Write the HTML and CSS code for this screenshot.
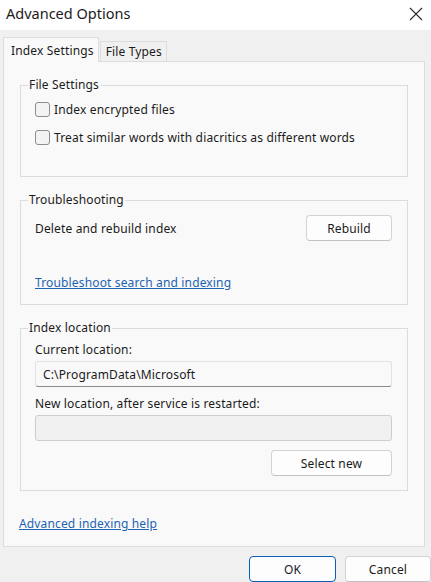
FILE: index.html
```html
<!DOCTYPE html>
<html>
<head>
<meta charset="utf-8">
<link rel="stylesheet" href="styles.css">
</head>
<body>
<div class="window">
  <div class="titlebar">
    <span class="title">Advanced Options</span>
    <svg class="close" width="14" height="14" viewBox="0 0 14 14"><path d="M1 1 L13 13 M13 1 L1 13" stroke="#2b2b2b" stroke-width="1.1" fill="none"/></svg>
  </div>
  <div class="body">
    <div class="tabs">
      <div class="tab active">Index Settings</div>
      <div class="tab">File Types</div>
    </div>
    <div class="panel">
      <fieldset class="group g1">
        <legend>File Settings</legend>
        <div class="checks">
          <label class="check-row"><span class="box"></span><span>Index encrypted files</span></label>
          <label class="check-row"><span class="box"></span><span>Treat similar words with diacritics as different words</span></label>
        </div>
      </fieldset>
      <fieldset class="group g2">
        <legend>Troubleshooting</legend>
        <div class="row-between">
          <span>Delete and rebuild index</span>
          <button class="btn">Rebuild</button>
        </div>
        <a class="link trouble">Troubleshoot search and indexing</a>
      </fieldset>
      <fieldset class="group g3">
        <legend>Index location</legend>
        <div class="label l1">Current location:</div>
        <div class="field readonly">C:\ProgramData\Microsoft</div>
        <div class="label l2">New location, after service is restarted:</div>
        <div class="field disabled"></div>
        <div class="right">
          <button class="btn">Select new</button>
        </div>
      </fieldset>
      <a class="link help">Advanced indexing help</a>
    </div>
    <div class="footer">
      <button class="btn ok">OK</button>
      <button class="btn cancel">Cancel</button>
    </div>
  </div>
</div>
</body>
</html>
```

FILE: styles.css
```css
* { box-sizing: border-box; }
html, body {
  margin: 0;
  padding: 0;
  width: 431px;
  height: 582px;
  overflow: hidden;
  background: #f0f0f0;
  font-family: "Noto Sans", "Open Sans", sans-serif;
  font-size: 12px;
  letter-spacing: 0.15px;
  color: #1b1b1b;
}
.window { width: 431px; height: 582px; display: flex; flex-direction: column; }
.titlebar {
  height: 31px;
  background: #ffffff;
  display: flex;
  align-items: center;
  justify-content: space-between;
  padding: 0 8px 5px 6px;
}
.title { font-size: 14.5px; letter-spacing: 0; color: #1b1b1b; }
.close { margin-top: 2px; }
.body { flex: 1; padding: 7px 6px 0 3px; display: flex; flex-direction: column; }
.tabs { display: flex; height: 24px; align-items: flex-end; position: relative; z-index: 1; }
.tab {
  height: 20px;
  padding: 0 4px 0 5px;
  border: 1px solid #dcdcdc;
  border-bottom: none;
  background: #f0f0f0;
  display: flex;
  align-items: center;
  margin-left: 1px;
}
.tab.active {
  height: 25px;
  margin-left: 0;
  padding: 0 4px 0 7px;
  background: #f9f9f9;
  margin-bottom: -1px;
}
.panel {
  height: 486px;
  border: 1px solid #dcdcdc;
  background: #f9f9f9;
  padding: 15px 16px 0 16px;
  display: flex;
  flex-direction: column;
}
.group {
  margin: 0;
  border: 1px solid #dcdcdc;
  padding: 0 15px 0 14px;
  min-width: 0;
  display: flex;
  flex-direction: column;
}
.group legend {
  line-height: 16px;
  padding: 0 1px;
  margin-left: -7px;
}
.g1 { height: 100px; }
.g2 { height: 113px; margin-top: 15px; }
.g3 { height: 171px; margin-top: 15px; }
.checks { display: flex; flex-direction: column; gap: 12px; padding-top: 8px; }
.check-row { display: flex; align-items: center; height: 16px; gap: 4px; }
.box {
  width: 15px;
  height: 15px;
  border: 1px solid #8d8d8d;
  border-radius: 3px;
  background: #f3f3f3;
  flex: none;
}
.row-between {
  display: flex;
  justify-content: space-between;
  align-items: center;
  margin-top: 7px;
}
.btn {
  font-family: inherit;
  font-size: 12px;
  letter-spacing: 0.15px;
  color: #1b1b1b;
  background: #fdfdfd;
  border: 1px solid #d3d3d3;
  border-bottom-color: #c2c2c2;
  border-radius: 4px;
  width: 86px;
  height: 26px;
  padding: 0;
}
.link {
  color: #1d63b3;
  text-decoration: underline;
  line-height: 16px;
  align-self: flex-start;
}
.trouble { margin-top: 34px; }
.label { line-height: 16px; }
.l1 { margin-top: 6px; }
.l2 { margin-top: 9px; }
.field {
  height: 26px;
  margin-top: 3px;
  border: 1px solid #e2e2e2;
  border-radius: 3px;
  display: flex;
  align-items: center;
  padding-left: 7px;
}
.field.readonly { background: #f9f9f9; border-bottom: 1px solid #8a8a8a; }
.field.disabled { background: #f0f0f0; border-color: #cdcdcd; }
.right { display: flex; justify-content: flex-end; margin-top: 9px; }
.right .btn { width: 121px; }
.help { margin-top: 25px; margin-left: -1px; }
.footer {
  display: flex;
  justify-content: flex-end;
  gap: 9px;
  margin-top: 9px;
  margin-right: -6px;
}
.ok { border: 1px solid #0a5fb0; width: 87px; }
.cancel { width: 86px; }
```
